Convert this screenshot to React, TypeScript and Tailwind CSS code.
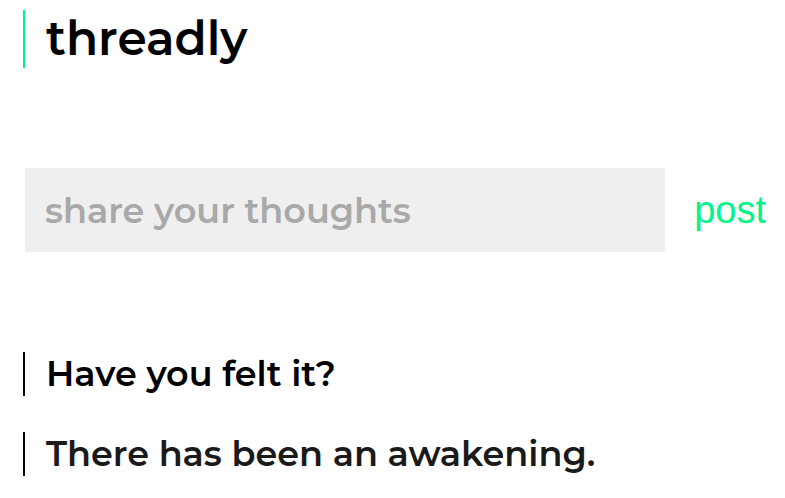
import React from "react";

const posts = [
  { id: 1, text: "Have you felt it?", tone: "text-black" },
  { id: 2, text: "There has been an awakening.", tone: "text-[#1a1a1a]" },
];

export default function App() {
  return (
    <main className="bg-white pl-[23px] pr-[19px] pt-[10px] font-['Montserrat','Inter',sans-serif] font-semibold text-black">
      <header className="border-l-2 border-[#00f08c] pl-[21px]">
        <h1 className="text-[47px] leading-[58px]">threadly</h1>
      </header>
      <form className="mt-[100px] ml-[2px] flex items-center gap-[29px]" onSubmit={(e) => e.preventDefault()}>
        <input
          type="text"
          aria-label="share your thoughts"
          placeholder="share your thoughts"
          className="h-[84px] min-w-0 flex-1 bg-[#efefef] px-5 text-[35px] outline-none placeholder:text-[#a9a9a9]"
        />
        <button type="submit" className="font-['Liberation_Sans',sans-serif] text-[38px] font-normal text-[#00f58c]">
          post
        </button>
      </form>
      <ul className="mt-[100px] flex flex-col gap-9">
        {posts.map((post) => (
          <li key={post.id} className={`border-l-2 border-black pl-[21px] text-[35px] leading-[44px] ${post.tone}`}>
            {post.text}
          </li>
        ))}
      </ul>
    </main>
  );
}
